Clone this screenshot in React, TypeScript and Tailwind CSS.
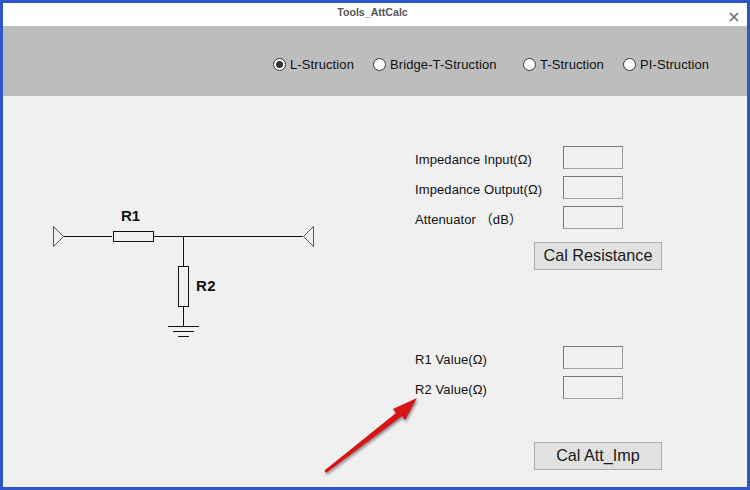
import React from 'react';

const structures = [
  { label: 'L-Struction', checked: true, width: 'w-[100px]' },
  { label: 'Bridge-T-Struction', checked: false, width: 'w-[150px]' },
  { label: 'T-Struction', checked: false, width: 'w-[100px]' },
  { label: 'PI-Struction', checked: false, width: 'w-[100px]' },
];

function Radio({ label, checked, width }: { label: string; checked: boolean; width: string }) {
  return (
    <div className={`flex items-center gap-[4px] ${width}`}>
      <span className="flex items-center justify-center w-[13px] h-[13px] rounded-full border border-[#333333] bg-white shrink-0">
        {checked && <span className="w-[7px] h-[7px] rounded-full bg-[#333333]" />}
      </span>
      <span className="text-[13px] tracking-[0.1px] leading-none text-[#111111]">{label}</span>
    </div>
  );
}

function Field({ label }: { label: string }) {
  return (
    <div className="flex items-center h-[23px]">
      <span className="w-[148px] pt-[3px] text-[13px] tracking-[0.1px] leading-none text-[#111111] whitespace-nowrap">{label}</span>
      <div className="w-[60px] h-[23px] border border-[#7a7a7a] border-r-[#a0a0a0] border-b-[#a0a0a0] bg-[#f0f0f0]" />
    </div>
  );
}

function CalButton({ label }: { label: string }) {
  return (
    <button className="w-[128px] h-[28px] ml-[119px] pb-[2px] border border-[#adadad] bg-[#e1e1e1] text-[16.2px] leading-none text-[#1a1a1a]">
      {label}
    </button>
  );
}

function Schematic() {
  return (
    <svg width="320" height="150" viewBox="0 0 320 150" className="shrink-0">
      <g fill="none" stroke="#111111" strokeWidth="1">
        <path d="M11 32.5h49M101.500 32.500h149" />
        <rect x="61.500" y="27.500" width="40" height="10" />
        <path d="M131.500 32.500v30" />
        <rect x="126.500" y="62.500" width="10" height="40" />
        <path d="M131.500 102.500v20" />
        <path d="M116 122.500h31M121 127.500h21M126 132.500h11" />
      </g>
      <g fill="none" stroke="#555555" strokeWidth="1">
        <path d="M1.500 22.500v20l10-10z" />
        <path d="M261.500 22.500v20l-10-10z" />
      </g>
      <text x="69" y="17" fontSize="15" fontWeight="700" fill="#111111">R1</text>
      <text x="144" y="87" fontSize="15" fontWeight="700" letterSpacing="0.5" fill="#111111">R2</text>
    </svg>
  );
}

export default function App() {
  return (
    <div className="relative w-[750px] h-[490px] flex flex-col border-t-[3px] border-b-[3px] border-l-[3px] border-r-[3px] border-[#2b57c7] bg-[#f0f0f0] overflow-hidden font-['Liberation_Sans','Noto_Sans_CJK_SC',Arial,sans-serif]">
      {/* Title bar */}
      <div className="relative flex items-center justify-center h-[23px] pr-[5px] bg-white shrink-0">
        <span className="text-[10.6px] font-bold text-[#555555] -mt-[3px]">Tools_AttCalc</span>
        <svg width="10" height="10" viewBox="0 0 10 10" className="absolute right-[8px] top-[9px]">
          <path d="M1 1l8 8M9 1l-8 8" stroke="#666666" strokeWidth="1.600" />
        </svg>
      </div>

      {/* Structure selector */}
      <div className="flex items-center justify-end h-[70px] pr-[24px] pt-[6px] bg-[#bdbdbd] shrink-0">
        {structures.map((s) => (
          <Radio key={s.label} {...s} />
        ))}
      </div>

      {/* Body */}
      <div className="flex flex-1">
        <div className="pl-[49px] pt-[108px] w-[412px] shrink-0">
          <Schematic />
        </div>
        <div className="flex flex-col pt-[50px]">
          <div className="flex flex-col gap-[7px]">
            <Field label="Impedance Input(Ω)" />
            <Field label="Impedance Output(Ω)" />
            <Field label="Attenuator （dB）" />
          </div>
          <div className="mt-[13px]">
            <CalButton label="Cal Resistance" />
          </div>
          <div className="flex flex-col gap-[7px] mt-[76px]">
            <Field label="R1 Value(Ω)" />
            <Field label="R2 Value(Ω)" />
          </div>
          <div className="mt-[43px]">
            <CalButton label="Cal Att_Imp" />
          </div>
        </div>
      </div>

      {/* Annotation arrow on top of the screenshot */}
      <svg width="750" height="490" viewBox="0 0 750 490" className="absolute -left-[3px] -top-[3px] pointer-events-none">
        <defs>
          <filter id="arrowShadow" x="-20%" y="-20%" width="150%" height="150%">
            <feDropShadow dx="1" dy="2" stdDeviation="1.500" floodColor="#000000" floodOpacity="0.450" />
          </filter>
        </defs>
        <path
          d="M324.500 470.500 L396 413 L393 409 L417 398 L405 420 L402 416 L326 473 Z"
          fill="#d41212"
          filter="url(#arrowShadow)"
        />
      </svg>
    </div>
  );
}
